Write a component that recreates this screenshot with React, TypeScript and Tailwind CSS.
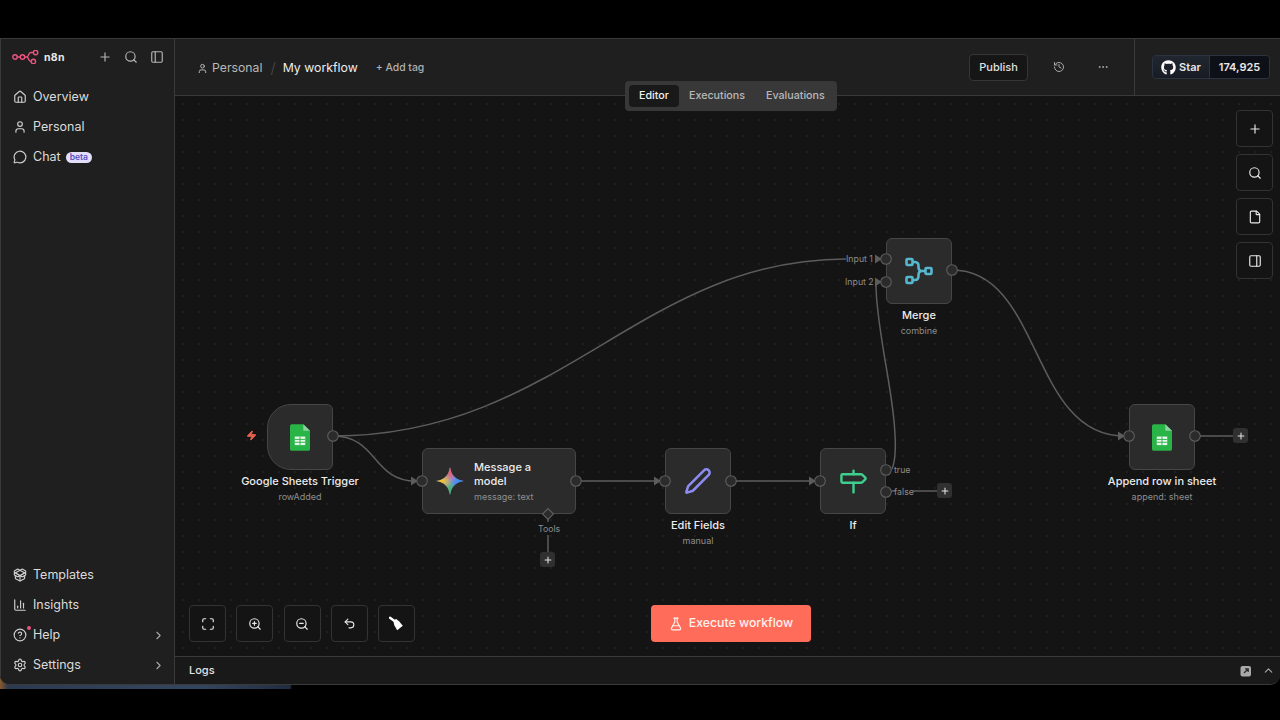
import type { ReactNode } from 'react'
import {
  ChartColumn, ChevronRight, ChevronUp, CircleHelp, Ellipsis, File, FlaskConical, History, House, Maximize,
  MessageCircle, PackageOpen, PanelLeft, PanelRight, Pen, Plus, Search, Settings, Undo2, User, Zap, ZoomIn, ZoomOut,
} from 'lucide-react'
import { FaGithub } from 'react-icons/fa'

function Logo() {
  return (
    <svg width="28" height="14" viewBox="0 0 28 14" fill="none" stroke="#e9537f" strokeWidth="1.4">
      <circle cx="3" cy="7" r="2.2" />
      <circle cx="10.5" cy="7" r="2.2" />
      <path d="M5.2 7h3M12.7 7h2.1c2 0 1.4-4.5 4-4.5h2.6M14.8 7c2 0 1.4 4.5 4 4.5h.4" />
      <circle cx="23.6" cy="2.5" r="2.2" />
      <circle cx="21.4" cy="11.5" r="2.2" />
    </svg>
  )
}

function SheetsIcon() {
  return (
    <svg width="20" height="27" viewBox="0 0 21 28">
      <path d="M2 0h12l7 7v19a2 2 0 0 1-2 2H2a2 2 0 0 1-2-2V2a2 2 0 0 1 2-2z" fill="#28b446" />
      <path d="M14 0l7 7h-7z" fill="#8ed1a0" />
      <path d="M5 13h11v9H5z" fill="#e9f6ec" />
      <path d="M5 16h11M5 19h11M10.500 13v9" stroke="#28b446" strokeWidth="1" />
    </svg>
  )
}

function GeminiIcon() {
  return (
    <svg width="30" height="30" viewBox="0 0 30 30">
      <defs>
        <clipPath id="star">
          <path d="M15 1c1.200 8 5.500 12.800 14 14-8.500 1.200-12.800 6-14 14-1.200-8-5.500-12.800-14-14 8.500-1.200 12.800-6 14-14z" />
        </clipPath>
        <filter id="soft"><feGaussianBlur stdDeviation="2.500" /></filter>
      </defs>
      <g clipPath="url(#star)">
        <rect width="30" height="30" fill="#6f8fd8" />
        <g filter="url(#soft)">
          <path d="M15 15L4 -2h22z" fill="#e8606a" />
          <path d="M15 15L32 2v26z" fill="#3f8cf5" />
          <path d="M15 15L26 32H4z" fill="#45b56a" />
          <path d="M15 15L-2 28V2z" fill="#f4c430" />
        </g>
      </g>
    </svg>
  )
}

function MergeIcon() {
  return (
    <svg width="30" height="30" viewBox="0 0 30 30" fill="none" stroke="#55b8cf" strokeWidth="2.600" strokeLinejoin="round">
      <rect x="2.500" y="3" width="6" height="6" rx="1" />
      <rect x="2.500" y="21" width="6" height="6" rx="1" />
      <rect x="21.500" y="12" width="6" height="6" rx="1" />
      <path d="M8.500 6h2.500c2.500 0 3.500 1.500 3.500 4v1c0 2.500 1 4 3.500 4h3.500M8.500 24h2.500c2.500 0 3.500-1.500 3.500-4v-1c0-2.500 1-4 3.500-4" />
    </svg>
  )
}

function SignIcon() {
  return (
    <svg width="29" height="29" viewBox="0 0 24 24" fill="none" stroke="#3ecf8e" strokeWidth="2" strokeLinecap="round" strokeLinejoin="round">
      <path d="M12 13v8M12 3v3" />
      <path d="M18 6a2 2 0 0 1 1.387.56l2.307 2.22a1 1 0 0 1 0 1.44l-2.307 2.22A2 2 0 0 1 18 13H3a1 1 0 0 1-1-1V7a1 1 0 0 1 1-1z" />
    </svg>
  )
}

function BroomIcon() {
  return (
    <svg width="15" height="15" viewBox="0 0 15 15" fill="#fff">
      <path d="M1 1.800L5.500 5" stroke="#fff" strokeWidth="2.400" strokeLinecap="round" />
      <path d="M4.200 4.400L7.200 2.900L10 5.200L13.800 9.800L8.200 14.200L5.400 9.600z" />
    </svg>
  )
}

function LogsPopIcon() {
  return (
    <svg width="12" height="12" viewBox="0 0 12 12">
      <rect x="0.500" y="1" width="10.500" height="10.500" rx="2" fill="#a8a8a8" />
      <path d="M4 8l4-4M5 3.800h3.200V7" stroke="#2a2a2a" strokeWidth="1.300" fill="none" />
    </svg>
  )
}

function NavItem({ icon, label, extra, chevron }: { icon: ReactNode; label: string; extra?: ReactNode; chevron?: boolean }) {
  return (
    <div className="relative flex h-[30px] items-center gap-[6px] pl-[11px] pr-[9px] text-[12.500px] text-[#dcdcdc]">
      <span className="flex w-[15px] justify-center text-[#cfcfcf]">{icon}</span>
      <span className="mt-[1px]">{label}</span>
      {extra}
      {chevron && <ChevronRight size={13} className="ml-auto text-[#a8a8a8]" />}
    </div>
  )
}

function Sidebar() {
  return (
    <aside className="flex w-[175px] shrink-0 flex-col justify-between border-x border-[#3a3a3a] bg-[#1f1f1f] pb-[4px]">
      <div>
        <div className="mb-[7px] flex h-[36px] items-center pl-[11px] pr-[10px]">
          <Logo />
          <span className="ml-[4px] mt-[1px] text-[10.500px] font-bold tracking-wide text-[#e8e8e8]">n8n</span>
          <div className="ml-auto flex items-center gap-[12px] text-[#b4b4b4]">
            <Plus size={14} />
            <Search size={14} />
            <PanelLeft size={14} />
          </div>
        </div>
        <NavItem icon={<House size={14} />} label="Overview" />
        <NavItem icon={<User size={14} />} label="Personal" />
        <NavItem
          icon={<MessageCircle size={14} />}
          label="Chat"
          extra={<span className="-ml-[1px] mt-[1px] rounded-full bg-[#e3defa] px-[4px] text-[8.500px] font-semibold leading-[11px] text-[#5b4fc4]">beta</span>}
        />
      </div>
      <div>
        <NavItem icon={<PackageOpen size={14} />} label="Templates" />
        <NavItem icon={<ChartColumn size={14} />} label="Insights" />
        <NavItem
          icon={<CircleHelp size={14} />}
          label="Help"
          chevron
          extra={<span className="absolute left-[26px] top-[6px] h-[4px] w-[4px] rounded-full bg-[#e9537f]" />}
        />
        <NavItem icon={<Settings size={14} />} label="Settings" chevron />
      </div>
    </aside>
  )
}

function Header() {
  return (
    <header className="flex h-[57px] shrink-0 items-center border-b border-[#3a3a3a] bg-[#1f1f1f] pl-[22px]">
      <div className="mt-[2px] flex items-center">
        <User size={11} className="text-[#c4c4c4]" />
        <span className="ml-[4px] text-[12.250px] text-[#b8b8b8]">Personal</span>
        <span className="ml-[8px] text-[15px] font-light text-[#4a4a4a]">/</span>
        <span className="ml-[7px] text-[12.300px] text-[#ececec]">My workflow</span>
        <span className="ml-[18px] text-[10.400px] font-medium text-[#b0b0b0]">+ Add tag</span>
      </div>
      <div className="ml-auto flex h-full items-center">
        <button className="flex h-[27px] w-[59px] items-center justify-center rounded-[4px] border border-[#363636] bg-[#161616] text-[11px] font-medium text-[#e0e0e0]">
          Publish
        </button>
        <History size={12} className="ml-[25px] text-[#a8a8a8]" />
        <Ellipsis size={12} className="ml-[32px] text-[#a8a8a8]" />
        <div className="ml-[25px] h-full w-px bg-[#3a3a3a]" />
        <div className="ml-[17px] mr-[10px] flex h-[24px] overflow-hidden rounded-[4px] border border-[#2c3340] text-[11px] font-semibold text-[#e8e8e8]">
          <div className="flex w-[57px] items-center justify-center gap-[3px] border-r border-[#2c3340] bg-[linear-gradient(180deg,#212730,#171c24)]">
            <FaGithub size={15} className="text-white" />
            <span>Star</span>
          </div>
          <div className="flex w-[59px] items-center justify-center bg-[#0d1117]">174,925</div>
        </div>
      </div>
    </header>
  )
}

function Tabs() {
  return (
    <div className="absolute left-[450px] top-[42px] z-10 flex h-[30px] w-[212px] items-center rounded-[4px] bg-[#383838] px-[4px] text-[10.700px] font-medium text-[#b8b8b8]">
      <span className="flex h-[22px] w-[50px] items-center justify-center rounded-[4px] bg-[#191919] text-[#f0f0f0]">Editor</span>
      <span className="ml-[10px]">Executions</span>
      <span className="ml-[21px]">Evaluations</span>
    </div>
  )
}

function NodeBox({ className, label, sub, children }: { className: string; label: string; sub?: string; children: ReactNode }) {
  return (
    <div className={`absolute h-[66px] border border-[#464646] bg-[#2b2b2b] ${className}`}>
      <div className="flex h-full items-center justify-center">{children}</div>
      <div className="absolute left-1/2 top-full mt-[4px] -translate-x-1/2 whitespace-nowrap text-center">
        <div className="text-[11px] font-medium leading-[16px] text-[#ececec]">{label}</div>
        {sub && <div className="mt-[1px] text-[9px] leading-[13px] text-[#8e8e8e]">{sub}</div>}
      </div>
    </div>
  )
}

function PortLabel({ className, children }: { className: string; children: string }) {
  return <span className={`absolute text-[8.750px] leading-[12px] text-[#8c8c8c] ${className}`}>{children}</span>
}

function AddButton({ className }: { className: string }) {
  return (
    <div className={`absolute flex h-[15px] w-[15px] items-center justify-center rounded-[3px] bg-[#303030] text-[#e4e4e4] ${className}`}>
      <Plus size={10} strokeWidth={2.500} />
    </div>
  )
}

const handles = [
  [333, 436], [422, 481], [576, 481], [665, 481], [731, 481], [820, 481], [886, 470], [886, 492],
  [886, 259], [886, 282], [952, 270], [1129, 436], [1195, 436],
]
const arrows = [[422, 481], [665, 481], [820, 481], [886, 259], [886, 282], [1129, 436]]

function EdgeLayer() {
  return (
    <svg className="absolute inset-0 h-full w-full" viewBox="175 96 1105 560" fill="none" stroke="#5c5c5c" strokeWidth="1.500">
      <path d="M333 436C560 436 640 259 846 259" />
      <path d="M333 436C378 436 372 481 416 481" />
      <path d="M576 481H660M731 481H814" />
      <path d="M952 270C1042 270 1030 436 1124 436" />
      <path d="M892 469C900 450 892 400 885 360C880 330 876 305 876 285" />
      <path d="M891 491H895M913 491H938M1195 436H1234M548 514V522M548 535V553" />
    </svg>
  )
}

function HandleLayer() {
  return (
    <svg className="pointer-events-none absolute inset-0 z-10 h-full w-full" viewBox="175 96 1105 560">
      {arrows.map(([x, y]) => (
        <path key={`${x}-${y}`} d={`M${x - 11} ${y - 4.500}L${x - 4} ${y}L${x - 11} ${y + 4.500}z`} fill="#5c5c5c" />
      ))}
      {handles.map(([x, y]) => (
        <circle key={`${x}-${y}`} cx={x} cy={y} r="5.300" fill="#2b2b2b" stroke="#5e5e5e" strokeWidth="1.100" />
      ))}
      <path d="M548 508.500l5.500 5.500-5.500 5.500-5.500-5.500z" fill="#2b2b2b" stroke="#5e5e5e" strokeWidth="1.100" />
    </svg>
  )
}

function ToolButton({ children }: { children: ReactNode }) {
  return (
    <button className="flex h-[37px] w-[37px] items-center justify-center rounded-[4px] border border-[#333] bg-[#141414] text-[#e8e8e8]">
      {children}
    </button>
  )
}

function Canvas() {
  return (
    <div className="relative flex-1 bg-[#141414] bg-[radial-gradient(#202020_1px,transparent_1px)] bg-[length:16px_16px]">
      <EdgeLayer />

      <Zap size={11} fill="#e5604f" className="absolute left-[71px] top-[334px] text-[#e5604f]" />
      <NodeBox className="left-[92px] top-[308px] w-[66px] rounded-l-[24px] rounded-r-[6px]" label="Google Sheets Trigger" sub="rowAdded">
        <SheetsIcon />
      </NodeBox>

      <div className="absolute left-[247px] top-[352px] flex h-[66px] w-[154px] items-center rounded-[6px] border border-[#464646] bg-[#2b2b2b] pl-[12px]">
        <GeminiIcon />
        <div className="ml-[9px]">
          <div className="text-[11px] font-medium leading-[14px] text-[#ececec]">Message a<br />model</div>
          <div className="mt-[2px] text-[9px] leading-[13px] text-[#8e8e8e]">message: text</div>
        </div>
      </div>

      <NodeBox className="left-[490px] top-[352px] w-[66px] rounded-[6px]" label="Edit Fields" sub="manual">
        <Pen size={28} strokeWidth={2.200} className="text-[#8b8bf0]" />
      </NodeBox>
      <NodeBox className="left-[645px] top-[352px] w-[66px] rounded-[6px]" label="If">
        <SignIcon />
      </NodeBox>
      <NodeBox className="left-[711px] top-[142px] w-[66px] rounded-[6px]" label="Merge" sub="combine">
        <MergeIcon />
      </NodeBox>
      <NodeBox className="left-[954px] top-[308px] w-[66px] rounded-[6px]" label="Append row in sheet" sub="append: sheet">
        <SheetsIcon />
      </NodeBox>

      <PortLabel className="left-[671px] top-[157px]">Input 1</PortLabel>
      <PortLabel className="left-[670px] top-[180px]">Input 2</PortLabel>
      <PortLabel className="left-[719px] top-[368px]">true</PortLabel>
      <PortLabel className="left-[719px] top-[390px]">false</PortLabel>
      <PortLabel className="left-[363px] top-[427px]">Tools</PortLabel>

      <AddButton className="left-[365px] top-[456px]" />
      <AddButton className="left-[762px] top-[387px]" />
      <AddButton className="left-[1058px] top-[332px]" />

      <HandleLayer />

      <div className="absolute right-[7px] top-[14px] flex flex-col gap-[7px]">
        <ToolButton><Plus size={14} /></ToolButton>
        <ToolButton><Search size={14} /></ToolButton>
        <ToolButton><File size={14} /></ToolButton>
        <ToolButton><PanelRight size={14} /></ToolButton>
      </div>

      <div className="absolute bottom-[14px] left-[14px] flex gap-[10.250px]">
        <ToolButton><Maximize size={14} /></ToolButton>
        <ToolButton><ZoomIn size={14} /></ToolButton>
        <ToolButton><ZoomOut size={14} /></ToolButton>
        <ToolButton><Undo2 size={13} /></ToolButton>
        <ToolButton><BroomIcon /></ToolButton>
      </div>

      <button className="absolute bottom-[14px] left-[476px] flex h-[37px] w-[160px] items-center justify-center gap-[6px] rounded-[4px] bg-[#ff6d5a] text-[12.250px] font-medium text-[#fff1ee]">
        <FlaskConical size={14} />
        Execute workflow
      </button>
    </div>
  )
}

function Logs() {
  return (
    <div className="flex h-[28px] shrink-0 items-center border-t border-[#3a3a3a] bg-[#191919] pl-[14px] pr-[5px]">
      <span className="text-[11px] font-medium text-[#e4e4e4]">Logs</span>
      <div className="ml-auto flex items-center gap-[10px] text-[#a8a8a8]">
        <LogsPopIcon />
        <ChevronUp size={13} />
      </div>
    </div>
  )
}

export default function App() {
  return (
    <div className="h-[720px] w-[1280px] overflow-hidden bg-black pt-[38px] font-['Inter',sans-serif]">
      <div className="h-[651px] bg-[linear-gradient(90deg,#8a5a2a_0,#2c3a50_8px,#34465f_200px,#222c40_290px,#000_292px)] pb-[4px]">
        <div className="flex h-[647px] overflow-hidden rounded-b-[10px] border-y border-[#3a3a3a] bg-[#1f1f1f]">
          <Sidebar />
          <main className="relative flex min-w-0 flex-1 flex-col">
            <Header />
            <Tabs />
            <Canvas />
            <Logs />
          </main>
        </div>
      </div>
    </div>
  )
}
